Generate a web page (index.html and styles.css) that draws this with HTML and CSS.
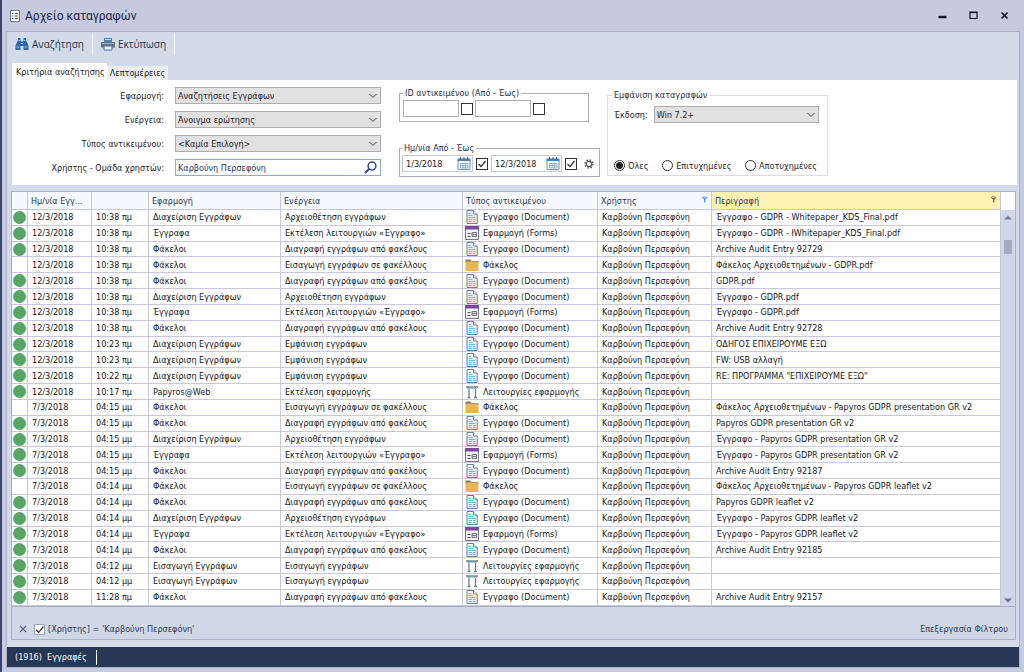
FILE: index.html
```html
<!DOCTYPE html>
<html lang="el">
<head>
<meta charset="utf-8">
<title>Αρχείο καταγραφών</title>
<link rel="stylesheet" href="styles.css">
</head>
<body>
<svg class="sprite" aria-hidden="true">
  <symbol id="i-doc" viewBox="0 0 12 14">
    <path d="M1 .5h6.5L11.200 4v9.500H1z" fill="#f4fafd" stroke="#6c7c8c"/>
    <path d="M7.500.500V4h3.700" fill="#fff" stroke="#6c7c8c"/>
    <path d="M2.500 3.500h3M2.500 5.500h4M2.500 7.500h7M2.500 9.500h7M2.500 11.500h7" stroke="#6fb0de" stroke-width="1.200"/>
    <path d="M6.500 9v3" stroke="#f4fafd"/>
  </symbol>
  <symbol id="i-form" viewBox="0 0 14 14">
    <path d="M.500 1.500h13v12H.500z" fill="#f3f2f6" stroke="#77758a"/>
    <path d="M0 0h14v3.500H0z" fill="#7d479e"/>
    <path d="M2.500 7.500h3M2.500 10.500h3" stroke="#555" />
    <path d="M7 6.500h4.500v4H7zM7 8.500h4.500" fill="#ddd" stroke="#777"/>
  </symbol>
  <symbol id="i-folder" viewBox="0 0 14 14">
    <path d="M.500 1.500h4.500l1.500 1.500h7v2H.500z" fill="#8b7758"/>
    <path d="M.500 3.500h13v9.500H.500z" fill="#e9b55c"/>
  </symbol>
  <symbol id="i-app" viewBox="0 0 14 14">
    <path d="M1 2h12M4 2v11M10.500 2v11M2.500 12.500h3M9 12.500h3" fill="none" stroke="#6d8190" stroke-width="1.300"/>
    <path d="M2 3.500h10" stroke="#b5c3cc"/>
  </symbol>
  <symbol id="i-filter" viewBox="0 0 8 8">
    <path d="M.500 1.500C2 .300 6 .300 7.500 1.500L5 4v3.500H3.500V4z" fill="currentColor"/>
    <path d="M2 1.800h4" stroke="#fff" stroke-width=".7"/>
  </symbol>
  <symbol id="i-cal" viewBox="0 0 14 13">
    <path d="M1 2.500h12v10H1z" fill="#f4f9fc" stroke="#7390aa"/>
    <path d="M.500 1.500h13v2.500H.500z" fill="#4b86b8"/>
    <path d="M3.500 0v3M7 0v3M10.500 0v3" stroke="#35608a"/>
    <path d="M3.500 6.500h7.500v4.500H3.500zM3.500 8.700H11M6 6.500V11M8.500 6.500V11" fill="none" stroke="#7ba6c8" stroke-width=".8"/>
  </symbol>
</svg>

<div class="window">
  <header class="titlebar">
    <svg class="title-icon" viewBox="0 0 10 12"><path d="M.500.500h9v11h-9z" fill="#fffef5" stroke="#6f7480"/><path d="M2 3.500h1.500M2 6h1.500M2 8.500h1.500" stroke="#2b62b0"/><path d="M4.500 3.500H8M4.500 6H8M4.500 8.500H8" stroke="#665d45"/></svg>
    <h1>Αρχείο καταγραφών</h1>
    <div class="window-buttons">
      <button type="button" aria-label="Ελαχιστοποίηση"><svg viewBox="0 0 9 9"><path d="M.500 6h8" stroke="#111528" stroke-width="2.400"/></svg></button>
      <button type="button" aria-label="Μεγιστοποίηση"><svg viewBox="0 0 9 9"><path d="M1 1.500h7v6H1z" fill="none" stroke="#111528" stroke-width="1.200"/><path d="M.500 1.300h8" stroke="#111528" stroke-width="1.600"/></svg></button>
      <button type="button" aria-label="Κλείσιμο"><svg viewBox="0 0 9 9"><path d="M1.500 1.500l6 6M7.500 1.500l-6 6" stroke="#111528" stroke-width="1.700"/></svg></button>
    </div>
  </header>

  <main class="frame">
    <nav class="toolbar">
      <button type="button"><svg viewBox="0 0 14 14"><path d="M3 1h2.500v2L6.300 4.500h1.400L8.500 3V1H11v2l2.500 5.500v4.500H8.500V9h-3v4H.500V8.500L3 3z" fill="#2c69a8"/><path d="M1.500 10h3M9.500 10h3M3.500 3.500h2M8.500 3.500h2M6 6.500h2" stroke="#a9cdea" stroke-width=".9"/></svg>Αναζήτηση</button>
      <button type="button"><svg viewBox="0 0 14 14"><path d="M3 1h8v4H3z" fill="#4d83ba"/><path d="M4 2.500h6" stroke="#c6dcef"/><path d="M0 5h14v5.500H0z" fill="#66707d"/><path d="M1 6.500h12" stroke="#aab3bf"/><path d="M3 9h8v4H3z" fill="#eaf3fb" stroke="#3f79b4"/></svg>Εκτύπωση</button>
    </nav>

    <div class="tabs" role="tablist">
      <button type="button" role="tab" aria-selected="true" class="tab tab-active">Κριτήρια αναζήτησης</button>
      <button type="button" role="tab" aria-selected="false" class="tab">Λεπτομέρειες</button>
    </div>

    <form class="criteria">
      <div class="fields">
        <label for="app">Εφαρμογή:</label>
        <select id="app"><option>Αναζητήσεις Εγγράφων</option></select>
        <label for="action">Ενέργεια:</label>
        <select id="action"><option>Άνοιγμα ερώτησης</option></select>
        <label for="type">Τύπος αντικειμένου:</label>
        <select id="type"><option>&lt;Καμία Επιλογή&gt;</option></select>
        <label for="user">Χρήστης - Ομάδα χρηστών:</label>
        <div class="lookup">
          <input id="user" type="text" value="Καρβούνη Περσεφόνη">
          <button type="button" aria-label="Εύρεση χρήστη"><svg viewBox="0 0 13 13"><circle cx="8" cy="5" r="3.900" fill="none" stroke="#25469c" stroke-width="1.500"/><path d="M5 8L1 12" stroke="#25469c" stroke-width="2"/></svg></button>
        </div>
      </div>

      <div class="ranges">
        <fieldset class="range-id">
          <legend>ID αντικειμένου (Από - Έως)</legend>
          <input class="num" type="text" aria-label="ID από"><input type="checkbox" aria-label="Χρήση ID από">
          <input class="num" type="text" aria-label="ID έως"><input type="checkbox" aria-label="Χρήση ID έως">
        </fieldset>
        <fieldset class="range-date">
          <legend>Ημ/νία Από - Έως</legend>
          <span class="date"><input type="text" value="1/3/2018" aria-label="Ημερομηνία από"><svg><use href="#i-cal"/></svg></span>
          <input type="checkbox" checked aria-label="Χρήση ημερομηνίας από">
          <span class="date"><input type="text" value="12/3/2018" aria-label="Ημερομηνία έως"><svg><use href="#i-cal"/></svg></span>
          <input type="checkbox" checked aria-label="Χρήση ημερομηνίας έως">
          <button type="button" class="gear" aria-label="Ρυθμίσεις"><svg viewBox="0 0 10 10"><circle cx="5" cy="5" r="2.700" fill="none" stroke="#555" stroke-width="1.200"/><circle cx="5" cy="5" r="4" fill="none" stroke="#555" stroke-width="1.400" stroke-dasharray="1.570 1.570"/></svg></button>
        </fieldset>
      </div>

      <fieldset class="display">
        <legend>Εμφάνιση καταγραφών</legend>
        <div class="version"><label for="version">Έκδοση:</label><select id="version"><option>Win 7.2+</option></select></div>
        <div class="radios">
          <label><input type="radio" name="show" checked>Όλες</label>
          <label><input type="radio" name="show">Επιτυχημένες</label>
          <label><input type="radio" name="show">Αποτυχημένες</label>
        </div>
      </fieldset>
    </form>

    <section class="grid">
      <div class="grid-body">
        <table>
          <colgroup><col class="c-dot"><col class="c-date"><col class="c-time"><col class="c-app"><col class="c-act"><col class="c-type"><col class="c-user"><col></colgroup>
          <thead>
            <tr><th></th><th>Ημ/νία Εγγ...</th><th></th><th>Εφαρμογή</th><th>Ενέργεια</th><th>Τύπος αντικειμένου</th><th><span class="th-filter">Χρήστης<svg class="blue"><use href="#i-filter"/></svg></span></th><th class="hot"><span class="th-filter">Περιγραφή<svg><use href="#i-filter"/></svg></span></th></tr>
          </thead>
          <tbody id="rows"></tbody>
        </table>
        <div class="scroll">
          <div class="scroll-head"></div>
          <svg viewBox="0 0 8 5"><path d="M0 4.500h8L4 .500z" fill="#77819c"/></svg>
          <div class="thumb"></div>
          <svg viewBox="0 0 8 5"><path d="M0 .500h8L4 4.500z" fill="#66728e"/></svg>
        </div>
      </div>
      <footer class="filter">
        <button type="button" aria-label="Καθαρισμός φίλτρου"><svg viewBox="0 0 8 8"><path d="M1 1l6 6M7 1L1 7" stroke="#5b6784" stroke-width="1.200"/></svg></button>
        <label><input type="checkbox" checked>[Χρήστης] = 'Καρβούνη Περσεφόνη'</label>
        <button type="button" class="edit">Επεξεργασία Φίλτρου</button>
      </footer>
    </section>

    <div class="status"><span>(1916)&nbsp; Εγγραφές</span></div>
  </main>
</div>
<script src="app.js"></script>
</body>
</html>
```
FILE: styles.css
```css
* { box-sizing: border-box; }
body {
  margin: 0;
  font-family: "DejaVu Sans Condensed", "DejaVu Sans", sans-serif;
  font-size: 9px;
  color: #1f2430;
  background: #c5cae0;
}
button, input, select { font: inherit; color: inherit; margin: 0; }
button { border: 0; padding: 0; background: none; }
svg { display: block; flex: none; }
.sprite { position: absolute; width: 0; height: 0; }

.window {
  min-height: 100vh;
  display: flex;
  flex-direction: column;
  padding: 0 4px 4px;
  border-left: 2px solid #3a4468;
  background: #c5cae0;
}
.titlebar {
  display: flex;
  align-items: center;
  gap: 5px;
  height: 31px;
  padding: 0 11px 0 4px;
}
.title-icon { width: 10px; height: 12px; }
h1 { margin: 0; font: 12px Roboto, sans-serif; color: #1d2848; }
.window-buttons { margin-left: auto; display: flex; gap: 22px; }
.window-buttons svg { width: 9px; height: 9px; }

.frame {
  flex: 1;
  display: flex;
  flex-direction: column;
  border: 1px solid #a9b1c9;
  background: #d3dae8;
}
.toolbar { display: flex; align-items: center; height: 24px; }
.toolbar button {
  display: flex;
  align-items: center;
  gap: 3px;
  height: 22px;
  padding: 0 8px;
  border-right: 1px solid #eef1f8;
  font-family: "Open Sans", sans-serif;
  font-size: 10px;
  color: #26334f;
}
.toolbar svg { width: 14px; height: 14px; }

.tabs { display: flex; align-items: flex-end; height: 24px; padding: 0 5px; }
.tab { height: 14px; padding: 0 3px; background: #eceef0; color: #1c1c1c; }
.tab-active { height: 17px; padding: 0 2px 0 4px; background: #fff; }

.criteria {
  display: flex;
  align-items: flex-start;
  height: 105px;
  margin: 0 2px 0 5px;
  padding: 7px 10px 8px;
  background: #fff;
}
.fields {
  display: grid;
  grid-template-columns: 142px 206px;
  grid-auto-rows: 17px;
  gap: 7px 11px;
  align-items: center;
}
.fields > label { text-align: right; }
select {
  appearance: none;
  width: 100%;
  height: 17px;
  padding: 0 14px 0 2px;
  border: 1px solid #adadad;
  border-radius: 0;
  background: #e1e1e1 url("data:image/svg+xml,%3Csvg xmlns='http://www.w3.org/2000/svg' width='8' height='6'%3E%3Cpath d='M.5 1L4 4.500 7.500 1' fill='none' stroke='%23444'/%3E%3C/svg%3E") no-repeat right 3px center;
}
.lookup {
  display: flex;
  align-items: center;
  height: 17px;
  padding: 0 3px 0 2px;
  border: 1px solid #8fa9cf;
  color: #26396b;
}
.lookup input { flex: 1; min-width: 0; border: 0; padding: 0; background: none; }
.lookup svg { width: 13px; height: 13px; }

fieldset { margin: 0; padding: 0; min-width: 0; border: 1px solid #a9adbc; }
legend { padding: 0 2px; line-height: 12px; color: #26304a; }
.ranges { display: grid; gap: 20px; margin-left: 18px; justify-items: start; }
.range-id { display: flex; align-items: center; gap: 2px; width: 190px; height: 35px; padding: 0 3px 3px; }
.range-date { display: flex; align-items: center; gap: 3px; width: 201px; height: 35px; padding: 0 2px 3px; }
.num { width: 56px; height: 17px; border: 1px solid #a9adbc; }
.date { display: flex; align-items: center; height: 17px; width: 71px; padding: 0 1px 0 3px; border: 1px solid #c3c9d6; }
.date input { flex: 1; min-width: 0; width: 0; border: 0; padding: 0; background: none; }
.date svg { width: 14px; height: 13px; }
.gear { margin-left: 4px; }
.gear svg { width: 10px; height: 10px; }

input[type="checkbox"] {
  appearance: none;
  flex: none;
  width: 12px;
  height: 12px;
  border: 1px solid #333;
  background: #fff;
}
input[type="checkbox"]:checked {
  background: #fff url("data:image/svg+xml,%3Csvg xmlns='http://www.w3.org/2000/svg' width='10' height='10'%3E%3Cpath d='M1.500 5L4 7.500 8.500 2' fill='none' stroke='%23333' stroke-width='1.200'/%3E%3C/svg%3E") no-repeat center;
}
input[type="radio"] {
  appearance: none;
  width: 11px;
  height: 11px;
  border: 1px solid #333;
  border-radius: 50%;
  background: #fff;
}
input[type="radio"]:checked { background: radial-gradient(#222 0 3px, #fff 4px); }

.display { display: flex; flex-direction: column; justify-content: space-between; width: 221px; height: 87px; margin: 2px 0 0 7px; padding: 5px 6px 4px; border-color: #dcdcdc; }
.display legend { margin-left: -2px; }
.version { display: flex; align-items: center; gap: 6px; padding-right: 2px; }
.radios { display: flex; justify-content: space-between; padding-right: 4px; }
.radios label { display: flex; align-items: center; gap: 3px; }

.grid { flex: 1; display: flex; flex-direction: column; margin: 6px 3px 7px 4px; border: 1px solid #a9b1c9; background: #d0d7e6; }
.grid-body { display: flex; border-bottom: 1px solid #a3adc4; }
table { flex: 1; height: 414px; table-layout: fixed; border-collapse: separate; border-spacing: 0; background: #fff; color: #15171e; }
.c-dot { width: 16px; }
.c-date { width: 64px; }
.c-time { width: 57px; }
.c-app { width: 132px; }
.c-act { width: 182px; }
.c-type { width: 135px; }
.c-user { width: 114px; }
th { height: 18px; padding: 0 3px; border: solid #c3c8dc; border-width: 0 1px 1px 0; background: #f6f9fd; font-weight: normal; text-align: left; color: #2c3a5c; white-space: nowrap; }
.hot { background: #fdf1b4; }
.th-filter { display: flex; justify-content: space-between; }
.th-filter svg { width: 7px; height: 7px; color: #67655a; }
.th-filter .blue { color: #3a9be6; }
td { padding: 0 4px; line-height: 14px; border: solid #c9c6de; border-width: 0 1px 1px 0; white-space: nowrap; overflow: hidden; }
td:first-child { padding: 0 1px; }
.dot { display: block; width: 13px; height: 13px; border-radius: 50%; background: #58a567; }
.type { display: flex; align-items: center; gap: 4px; margin-left: -2px; }
.type svg { width: 14px; height: 14px; }
.scroll { display: flex; flex-direction: column; align-items: center; width: 14px; background: #d0d7e8; }
.scroll-head { align-self: stretch; height: 18px; margin-bottom: 5px; background: #fff; }
.scroll svg { width: 8px; height: 5px; }
.thumb { width: 8px; height: 14px; margin: 20px 0 auto; background: #a3abc2; }
.scroll svg:last-child { margin-bottom: 3px; }

.filter { flex: 1; display: flex; align-items: center; gap: 7px; padding: 12px 7px 0; color: #2b3858; }
.filter svg { width: 8px; height: 8px; }
.filter label { display: flex; align-items: center; gap: 3px; }
.filter input[type="checkbox"] { width: 11px; height: 11px; border-color: #9aa6be; }
.edit { margin-left: auto; }

.status { display: flex; align-items: center; height: 20px; padding: 0 8px; background: #273756; color: #fff; }
.status span { padding-right: 9px; border-right: 1px solid #fff; line-height: 15px; }
```
FILE: app.js
```javascript
const TYPES = {
  doc: 'Εγγραφο (Document)',
  form: 'Εφαρμογή (Forms)',
  folder: 'Φάκελος',
  app: 'Λειτουργίες εφαρμογής'
};
const USER = 'Καρβούνη Περσεφόνη';
const ARCHIVE = ['Διαχείριση Εγγράφων', 'Αρχειοθέτηση εγγράφων', 'doc'];
const RUN = ['Έγγραφα', 'Εκτέλεση λειτουργιών «Έγγραφο»', 'form'];
const REMOVE = ['Φάκελοι', 'Διαγραφή εγγράφων από φακέλους', 'doc'];
const INSERT = ['Φάκελοι', 'Εισαγωγή εγγράφων σε φακέλλους', 'folder'];
const VIEW = ['Διαχείριση Εγγράφων', 'Εμφάνιση εγγράφων', 'doc'];
const IMPORT = ['Εισαγωγή Εγγράφων', 'Εισαγωγή εγγράφων', 'app'];
const WEB = ['Papyros@Web', 'Εκτέλεση εφαρμογής', 'app'];

const entries = [
  ['12/3/2018', '10:38 πμ', ARCHIVE, 'Έγγραφο - GDPR - Whitepaper_KDS_Final.pdf'],
  ['12/3/2018', '10:38 πμ', RUN, 'Έγγραφο - GDPR - łWhitepaper_KDS_Final.pdf'],
  ['12/3/2018', '10:38 πμ', REMOVE, 'Archive Audit Entry 92729'],
  ['12/3/2018', '10:38 πμ', INSERT, 'Φάκελος Αρχειοθετημένων - GDPR.pdf'],
  ['12/3/2018', '10:38 πμ', REMOVE, 'GDPR.pdf'],
  ['12/3/2018', '10:38 πμ', ARCHIVE, 'Έγγραφο - GDPR.pdf'],
  ['12/3/2018', '10:38 πμ', RUN, 'Έγγραφο - GDPR.pdf'],
  ['12/3/2018', '10:38 πμ', REMOVE, 'Archive Audit Entry 92728'],
  ['12/3/2018', '10:23 πμ', VIEW, 'ΟΔΗΓΟΣ ΕΠΙΧΕΙΡΟΥΜΕ ΕΞΩ'],
  ['12/3/2018', '10:23 πμ', VIEW, 'FW: USB αλλαγή'],
  ['12/3/2018', '10:22 πμ', VIEW, 'RE: ΠΡΟΓΡΑΜΜΑ "ΕΠΙΧΕΙΡΟΥΜΕ ΕΞΩ"'],
  ['12/3/2018', '10:17 πμ', WEB, ''],
  ['7/3/2018', '04:15 μμ', INSERT, 'Φάκελος Αρχειοθετημένων - Papyros GDPR presentation GR v2'],
  ['7/3/2018', '04:15 μμ', REMOVE, 'Papyros GDPR presentation GR v2'],
  ['7/3/2018', '04:15 μμ', ARCHIVE, 'Έγγραφο - Papyros GDPR presentation GR v2'],
  ['7/3/2018', '04:15 μμ', RUN, 'Έγγραφο - Papyros GDPR presentation GR v2'],
  ['7/3/2018', '04:15 μμ', REMOVE, 'Archive Audit Entry 92187'],
  ['7/3/2018', '04:14 μμ', INSERT, 'Φάκελος Αρχειοθετημένων - Papyros GDPR leaflet v2'],
  ['7/3/2018', '04:14 μμ', REMOVE, 'Papyros GDPR leaflet v2'],
  ['7/3/2018', '04:14 μμ', ARCHIVE, 'Έγγραφο - Papyros GDPR leaflet v2'],
  ['7/3/2018', '04:14 μμ', RUN, 'Έγγραφο - Papyros GDPR leaflet v2'],
  ['7/3/2018', '04:14 μμ', REMOVE, 'Archive Audit Entry 92185'],
  ['7/3/2018', '04:12 μμ', IMPORT, ''],
  ['7/3/2018', '04:12 μμ', IMPORT, ''],
  ['7/3/2018', '11:28 πμ', REMOVE, 'Archive Audit Entry 92157']
];

document.getElementById('rows').innerHTML = entries.map(([date, time, [app, action, type], text]) => `
  <tr>
    <td>${type === 'folder' ? '' : '<span class="dot"></span>'}</td>
    <td>${date}</td><td>${time}</td><td>${app}</td><td>${action}</td>
    <td><span class="type"><svg><use href="#i-${type}"/></svg>${TYPES[type]}</span></td>
    <td>${USER}</td><td>${text}</td>
  </tr>`).join('');
```
